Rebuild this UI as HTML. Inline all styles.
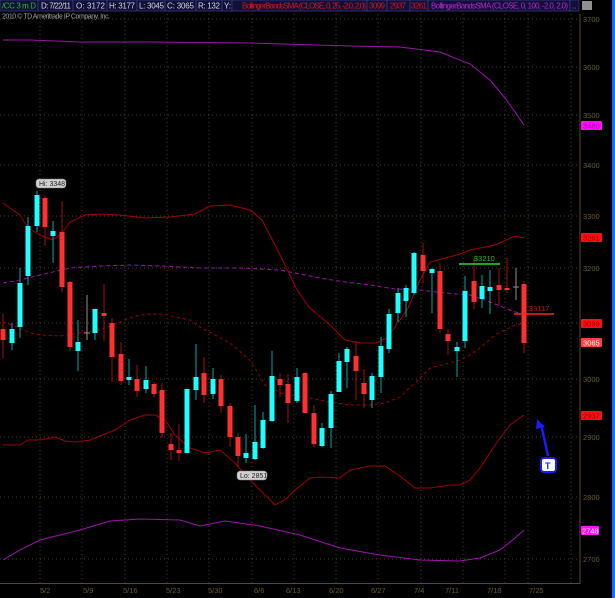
<!DOCTYPE html>
<html><head><meta charset="utf-8"><style>
html,body{margin:0;padding:0;background:#000;width:615px;height:598px;overflow:hidden}
svg{display:block;font-family:"Liberation Sans",sans-serif}
</style></head><body>
<svg width="615" height="598" viewBox="0 0 615 598" xmlns="http://www.w3.org/2000/svg">
<rect width="615" height="598" fill="#000"/>
<!-- header -->
<g font-size="8">
<rect x="0" y="0" width="38" height="11" fill="#10103a" stroke="#3a3a80" stroke-width="0.8"/>
<text x="2" y="8.5" fill="#20c020" textLength="34">/CC 3 m D</text>
<rect x="38" y="0" width="35" height="11" fill="#10103a" stroke="#3a3a80" stroke-width="0.8"/>
<text x="41" y="8.5" fill="#d8d8d8" textLength="30">D: 7/22/11</text>
<rect x="73" y="0" width="34" height="11" fill="#10103a" stroke="#3a3a80" stroke-width="0.8"/>
<text x="76" y="8.5" fill="#d8d8d8" textLength="29">O: 3172</text>
<rect x="107" y="0" width="30" height="11" fill="#10103a" stroke="#3a3a80" stroke-width="0.8"/>
<text x="109" y="8.5" fill="#d8d8d8" textLength="26">H: 3177</text>
<rect x="137" y="0" width="28" height="11" fill="#10103a" stroke="#3a3a80" stroke-width="0.8"/>
<text x="139" y="8.5" fill="#d8d8d8" textLength="25">L: 3045</text>
<rect x="165" y="0" width="31" height="11" fill="#10103a" stroke="#3a3a80" stroke-width="0.8"/>
<text x="167" y="8.5" fill="#d8d8d8" textLength="27">C: 3065</text>
<rect x="196" y="0" width="26" height="11" fill="#10103a" stroke="#3a3a80" stroke-width="0.8"/>
<text x="198" y="8.5" fill="#d8d8d8" textLength="22">R: 132</text>
<rect x="222" y="0" width="10" height="11" fill="#10103a" stroke="#3a3a80" stroke-width="0.8"/>
<text x="224" y="8.5" fill="#d8d8d8">Y:</text>
<rect x="232" y="0" width="135" height="11" fill="#10103a" stroke="#3a3a80" stroke-width="0.8"/>
<text x="242" y="8.5" fill="#e01010" textLength="124">BollingerBandsSMA (CLOSE, 0, 25, -2.0, 2.0)</text>
<rect x="367" y="0" width="20" height="11" fill="#10103a" stroke="#3a3a80" stroke-width="0.8"/>
<text x="369" y="8.5" fill="#e01010" textLength="16">3099</text>
<rect x="387" y="0" width="23" height="11" fill="#10103a" stroke="#3a3a80" stroke-width="0.8"/>
<text x="390" y="8.5" fill="#e01010" textLength="16">2937</text>
<rect x="410" y="0" width="18" height="11" fill="#10103a" stroke="#3a3a80" stroke-width="0.8"/>
<text x="411" y="8.5" fill="#e01010" textLength="16">3261</text>
<rect x="428" y="0" width="142" height="11" fill="#10103a" stroke="#3a3a80" stroke-width="0.8"/>
<text x="431" y="8.5" fill="#c020d0" textLength="137">BollingerBandsSMA (CLOSE, 0, 100, -2.0, 2.0)</text>
<rect x="570" y="0" width="9" height="11" fill="#10103a" stroke="#3a3a80" stroke-width="0.8"/>
<text x="572" y="8.5" fill="#8080c0">..</text>
<rect x="582" y="1" width="10" height="9" fill="#909090"/>
<text x="2" y="18.5" fill="#a0a0a0" font-size="7" textLength="108">2010 © TD Ameritrade IP Company, Inc.</text>
</g>
<rect x="612" y="0" width="3" height="598" fill="#1a6cff"/>
<!-- grid -->
<g stroke="#4a4018" stroke-width="1" stroke-dasharray="1,3">
<line x1="0" x2="580" y1="19" y2="19"/><line x1="0" x2="580" y1="67" y2="67"/><line x1="0" x2="580" y1="115" y2="115"/>
<line x1="0" x2="580" y1="165" y2="165"/><line x1="0" x2="580" y1="216" y2="216"/><line x1="0" x2="580" y1="268" y2="268"/>
<line x1="0" x2="580" y1="323" y2="323"/><line x1="0" x2="580" y1="379" y2="379"/><line x1="0" x2="580" y1="437" y2="437"/>
<line x1="0" x2="580" y1="497" y2="497"/><line x1="0" x2="580" y1="559" y2="559"/>
<line x1="40" x2="40" y1="14" y2="583"/><line x1="82" x2="82" y1="14" y2="583"/><line x1="125" x2="125" y1="14" y2="583"/>
<line x1="167" x2="167" y1="14" y2="583"/><line x1="209" x2="209" y1="14" y2="583"/><line x1="252" x2="252" y1="14" y2="583"/>
<line x1="294" x2="294" y1="14" y2="583"/><line x1="336" x2="336" y1="14" y2="583"/><line x1="378" x2="378" y1="14" y2="583"/>
<line x1="421" x2="421" y1="14" y2="583"/><line x1="463" x2="463" y1="14" y2="583"/><line x1="505" x2="505" y1="14" y2="583"/>
<line x1="528" x2="528" y1="14" y2="583"/><line x1="571" x2="571" y1="14" y2="583"/>
</g>
<g stroke="#5a4a20" stroke-width="1">
<line x1="580" y1="14" x2="580" y2="584"/><line x1="0" y1="583.5" x2="580" y2="583.5"/>
</g>
<g fill="#6a5a30" font-size="7.5">
<text x="583" y="22">3700</text><text x="583" y="70">3600</text><text x="583" y="118">3500</text>
<text x="583" y="168">3400</text><text x="583" y="219">3300</text><text x="583" y="271">3200</text>
<text x="583" y="326">3100</text><text x="583" y="382">3000</text><text x="583" y="440">2900</text>
<text x="583" y="500">2800</text><text x="583" y="562">2700</text>
<text x="40" y="593">5/2</text><text x="83" y="593">5/9</text><text x="123" y="593">5/16</text>
<text x="166" y="593">5/23</text><text x="208" y="593">5/30</text><text x="254" y="593">6/6</text>
<text x="286" y="593">6/13</text><text x="329" y="593">6/20</text><text x="371" y="593">6/27</text>
<text x="414" y="593">7/4</text><text x="445" y="593">7/11</text><text x="487" y="593">7/18</text><text x="529" y="593">7/25</text>
</g>
<g fill="none" stroke-width="1">
<polyline stroke="#a010b0" points="3,40 30,40 80,42 150,42 250,43 350,46 400,47 440,52 470,64 490,80 505,98 515,112 524,125"/>
<polyline stroke="#a010b0" points="3,560 20,550 40,540 80,530 110,521 140,519 180,520 200,526 225,521 260,526 300,535 340,548 380,555 420,560 460,561 480,558 500,550 515,538 524,530"/>
<polyline stroke="#a010b0" stroke-dasharray="4,3" points="3,283 20,280 40,275 70,268 100,266 130,265 160,266 200,268 240,268 280,270 320,278 345,282 370,285 395,289 420,290 445,293 470,295 490,302 510,310 524,315"/>
<polyline stroke="#a00000" points="3,203 20,215 28,228 40,235 53,240 62,233 70,222 85,215 100,214 120,215 145,218 170,217 195,214 210,206 230,205 250,210 262,220 275,245 285,265 297,290 310,308 330,325 345,340 360,343 375,343 387,338 400,320 408,308 420,280 430,262 445,258 460,254 470,250 495,245 515,236 524,238"/>
<polyline stroke="#a00000" stroke-dasharray="3,3" points="3,322 12,325 28,332 40,335 60,336 80,333 100,330 120,322 135,316 150,314 165,314 175,317 190,320 200,327 215,335 230,343 250,360 265,385 285,395 305,397 330,402 350,405 370,405 385,403 400,397 415,383 430,368 445,364 460,360 470,355 480,348 495,335 515,325 524,323"/>
<polyline stroke="#a00000" points="3,445 20,445 28,440 40,440 55,437 65,441 75,442 90,440 115,430 130,420 145,415 155,415 165,420 175,435 190,448 205,453 220,450 235,463 250,480 265,495 275,505 285,500 295,490 310,478 320,477 340,478 350,470 370,466 385,466 400,476 415,488 430,488 450,485 460,485 470,480 480,468 495,445 510,425 524,415"/>
</g>
<g>
<g stroke="#00a8a8"><line x1="12" y1="323" x2="12" y2="350"/><line x1="20" y1="268" x2="20" y2="338"/><line x1="28" y1="217" x2="28" y2="285"/><line x1="37" y1="191" x2="37" y2="232"/><line x1="53" y1="221" x2="53" y2="263"/><line x1="78" y1="320" x2="78" y2="371"/><line x1="95" y1="309" x2="95" y2="340"/><line x1="129" y1="359" x2="129" y2="385"/><line x1="146" y1="366" x2="146" y2="393"/><line x1="187" y1="389" x2="187" y2="453"/><line x1="196" y1="344" x2="196" y2="400"/><line x1="213" y1="368" x2="213" y2="399"/><line x1="246" y1="434" x2="246" y2="463"/><line x1="255" y1="405" x2="255" y2="460"/><line x1="263" y1="412" x2="263" y2="449"/><line x1="272" y1="351" x2="272" y2="422"/><line x1="297" y1="368" x2="297" y2="403"/><line x1="322" y1="423" x2="322" y2="447"/><line x1="331" y1="391" x2="331" y2="448"/><line x1="339" y1="353" x2="339" y2="392"/><line x1="347" y1="347" x2="347" y2="388"/><line x1="372" y1="373" x2="372" y2="408"/><line x1="381" y1="337" x2="381" y2="393"/><line x1="389" y1="309" x2="389" y2="353"/><line x1="398" y1="288" x2="398" y2="322"/><line x1="406" y1="285" x2="406" y2="317"/><line x1="414" y1="252" x2="414" y2="295"/><line x1="432" y1="268" x2="432" y2="313"/><line x1="457" y1="342" x2="457" y2="377"/><line x1="465" y1="276" x2="465" y2="348"/><line x1="482" y1="275" x2="482" y2="308"/><line x1="490" y1="270" x2="490" y2="314"/></g>
<g stroke="#a01010"><line x1="3" y1="314" x2="3" y2="358"/><line x1="45" y1="196" x2="45" y2="246"/><line x1="62" y1="201" x2="62" y2="292"/><line x1="70" y1="281" x2="70" y2="351"/><line x1="104" y1="284" x2="104" y2="341"/><line x1="112" y1="318" x2="112" y2="382"/><line x1="121" y1="342" x2="121" y2="385"/><line x1="137" y1="365" x2="137" y2="397"/><line x1="154" y1="382" x2="154" y2="397"/><line x1="162" y1="383" x2="162" y2="438"/><line x1="171" y1="433" x2="171" y2="460"/><line x1="179" y1="424" x2="179" y2="461"/><line x1="204" y1="357" x2="204" y2="403"/><line x1="221" y1="375" x2="221" y2="413"/><line x1="230" y1="403" x2="230" y2="447"/><line x1="238" y1="433" x2="238" y2="468"/><line x1="280" y1="373" x2="280" y2="397"/><line x1="288" y1="374" x2="288" y2="423"/><line x1="305" y1="373" x2="305" y2="413"/><line x1="314" y1="405" x2="314" y2="447"/><line x1="356" y1="341" x2="356" y2="400"/><line x1="364" y1="369" x2="364" y2="408"/><line x1="423" y1="243" x2="423" y2="283"/><line x1="440" y1="263" x2="440" y2="333"/><line x1="448" y1="329" x2="448" y2="355"/><line x1="474" y1="258" x2="474" y2="309"/><line x1="499" y1="268" x2="499" y2="305"/><line x1="507" y1="258" x2="507" y2="293"/><line x1="524" y1="281" x2="524" y2="353"/></g>
<g stroke="#909090"><line x1="87" y1="295" x2="87" y2="340"/><line x1="516" y1="268" x2="516" y2="300"/><line x1="84" y1="333" x2="90" y2="333"/><line x1="513" y1="287" x2="519" y2="287"/></g>
<g fill="#20ffff"><rect x="9.5" y="329" width="5" height="14"/><rect x="17.5" y="283" width="5" height="44"/><rect x="25.5" y="226" width="5" height="50"/><rect x="34.5" y="195" width="5" height="31"/><rect x="50.5" y="231" width="5" height="5"/><rect x="75.5" y="342" width="5" height="9"/><rect x="92.5" y="309" width="5" height="24"/><rect x="126.5" y="377" width="5" height="3"/><rect x="143.5" y="380" width="5" height="9"/><rect x="184.5" y="389" width="5" height="64"/><rect x="193.5" y="377" width="5" height="13"/><rect x="210.5" y="379" width="5" height="15"/><rect x="243.5" y="453" width="5" height="5"/><rect x="252.5" y="442" width="5" height="17"/><rect x="260.5" y="420" width="5" height="28"/><rect x="269.5" y="376" width="5" height="45"/><rect x="294.5" y="377" width="5" height="24"/><rect x="319.5" y="428" width="5" height="18"/><rect x="328.5" y="394" width="5" height="34"/><rect x="336.5" y="361" width="5" height="31"/><rect x="344.5" y="349" width="5" height="13"/><rect x="369.5" y="376" width="5" height="24"/><rect x="378.5" y="346" width="5" height="31"/><rect x="386.5" y="314" width="5" height="35"/><rect x="395.5" y="293" width="5" height="20"/><rect x="403.5" y="288" width="5" height="13"/><rect x="411.5" y="253" width="5" height="40"/><rect x="429.5" y="269" width="5" height="4"/><rect x="454.5" y="347" width="5" height="4"/><rect x="462.5" y="291" width="5" height="50"/><rect x="479.5" y="286" width="5" height="13"/><rect x="487.5" y="287" width="5" height="4"/></g>
<g fill="#ff3030"><rect x="0.5" y="329" width="5" height="11"/><rect x="42.5" y="198" width="5" height="29"/><rect x="59.5" y="232" width="5" height="55"/><rect x="67.5" y="282" width="5" height="65"/><rect x="101.5" y="313" width="5" height="3"/><rect x="109.5" y="323" width="5" height="34"/><rect x="118.5" y="354" width="5" height="27"/><rect x="134.5" y="379" width="5" height="12"/><rect x="151.5" y="384" width="5" height="10"/><rect x="159.5" y="390" width="5" height="43"/><rect x="168.5" y="444" width="5" height="6"/><rect x="176.5" y="450" width="5" height="3"/><rect x="201.5" y="373" width="5" height="22"/><rect x="218.5" y="379" width="5" height="27"/><rect x="227.5" y="406" width="5" height="31"/><rect x="235.5" y="437" width="5" height="19"/><rect x="277.5" y="379" width="5" height="6"/><rect x="285.5" y="384" width="5" height="19"/><rect x="302.5" y="373" width="5" height="40"/><rect x="311.5" y="413" width="5" height="31"/><rect x="353.5" y="356" width="5" height="15"/><rect x="361.5" y="383" width="5" height="11"/><rect x="420.5" y="255" width="5" height="16"/><rect x="437.5" y="271" width="5" height="58"/><rect x="445.5" y="334" width="5" height="7"/><rect x="471.5" y="281" width="5" height="21"/><rect x="496.5" y="285" width="5" height="5"/><rect x="504.5" y="288" width="5" height="2"/><rect x="521.5" y="284" width="5" height="59"/></g>
</g>
<line x1="459" y1="264" x2="500" y2="264" stroke="#20e020" stroke-width="1.5"/>
<text x="474" y="261" fill="#20c020" font-size="7.5">$3210</text>
<line x1="514" y1="314" x2="554" y2="314" stroke="#ff2020" stroke-width="1.5"/>
<text x="529" y="311" fill="#c02020" font-size="7.5">$3117</text>
<rect x="36" y="179" width="30" height="9" rx="3" fill="#d0d0d0" stroke="#808080" stroke-width="0.5"/>
<text x="39" y="186" fill="#202020" font-size="7">Hi: 3348</text>
<rect x="237" y="471" width="30" height="9" rx="3" fill="#d0d0d0" stroke="#808080" stroke-width="0.5"/>
<text x="240" y="478" fill="#202020" font-size="7">Lo: 2851</text>
<g font-size="7.5">
<rect x="581" y="121" width="21" height="9" rx="1" fill="#ff10ff"/><text x="583" y="128.5" fill="#a000a0">3480</text>
<rect x="581" y="233" width="21" height="9" rx="1" fill="#ff1010"/><text x="583" y="240.5" fill="#900000">3261</text>
<rect x="581" y="319" width="21" height="9" rx="1" fill="#ff1010"/><text x="583" y="326.5" fill="#900000">3099</text>
<rect x="581" y="338" width="21" height="9" rx="1" fill="#ff4040"/><text x="583" y="345.5" fill="#fff0f0">3065</text>
<rect x="581" y="411" width="21" height="9" rx="1" fill="#ff1010"/><text x="583" y="418.5" fill="#900000">2937</text>
<rect x="581" y="526" width="18" height="9" rx="1" fill="#ff10ff"/><text x="582" y="533.5" fill="#ffe0ff">2748</text>
</g>
<line x1="548" y1="456" x2="541" y2="424" stroke="#1a1aff" stroke-width="2.5"/>
<polygon points="537,419 545,427 536,429" fill="#1a1aff"/>
<rect x="541" y="458" width="15" height="14" rx="3" fill="#fff" stroke="#1a1aff" stroke-width="2"/>
<text x="545" y="469" fill="#1a1aff" font-size="9" font-weight="bold">T</text>
</svg>
</body></html>
